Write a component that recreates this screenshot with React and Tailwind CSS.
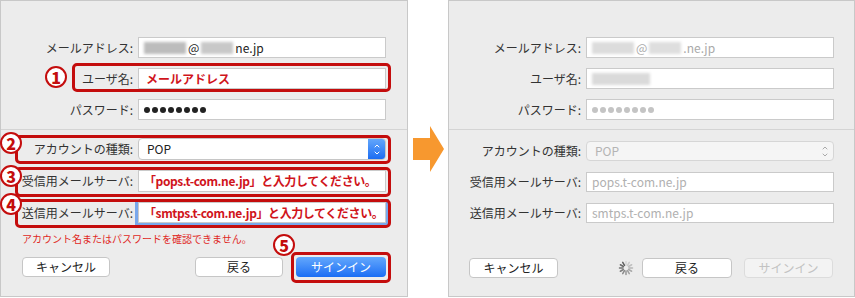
import { ChevronUp, ChevronDown } from 'lucide-react'

const font = "font-['Noto_Sans_CJK_JP',sans-serif]"

function Row({ label, children, className = '' }) {
  return (
    <div className={`flex items-center ${className}`}>
      <div className="w-[132px] text-right text-[12px] text-[#333] whitespace-nowrap">{label}</div>
      <div className="ml-[5px] w-[248px]">{children}</div>
    </div>
  )
}

function Field({ children, className = '', h = 'h-[21px]' }) {
  return (
    <div className={`${h} border border-[#cacaca] bg-white flex items-center px-[5px] text-[12px] whitespace-nowrap overflow-hidden ${className}`}>
      {children}
    </div>
  )
}

function Blur({ w, c = 'bg-[#c4c4c4]' }) {
  return <span className={`inline-block h-[12px] ${w} ${c} blur-[1.5px]`} />
}

// masked password characters
function Dots({ color }) {
  return (
    <span className="flex gap-[2px]" aria-label="●●●●●●●●">
      {Array.from({ length: 8 }, (_, i) => (
        <span key={i} className={`w-[6px] h-[6px] rounded-full ${color}`} />
      ))}
    </span>
  )
}

function Badge({ n, className }) {
  return (
    <div className={`absolute w-[22px] h-[22px] rounded-full border-[2.5px] border-[#c40d0d] bg-white text-[#c40d0d] font-black text-[16px] leading-none flex items-center justify-center ${className}`}>
      {n}
    </div>
  )
}

function Mark({ className }) {
  return <div className={`absolute border-[3px] border-[#c40d0d] rounded-[5px] ${className}`} />
}

function Button({ children, className = '' }) {
  return (
    <div className={`h-[20px] rounded-[4px] border border-[#c6c6c6] bg-white flex items-center justify-center text-[12px] text-[#222] ${className}`}>
      {children}
    </div>
  )
}

function Spinner() {
  const rays = Array.from({ length: 12 }, (_, i) => i)
  return (
    <svg width="16" height="16" viewBox="0 0 16 16">
      {rays.map((i) => (
        <line
          key={i}
          x1="8" y1="1.5" x2="8" y2="5"
          stroke="#555"
          strokeWidth="1.5"
          strokeLinecap="round"
          opacity={0.15 + (i / 12) * 0.85}
          transform={`rotate(${i * 30} 8 8)`}
        />
      ))}
    </svg>
  )
}

function Separator() {
  return <div className="mt-[9px] h-px bg-[#d4d4d4]" />
}

function LeftPanel() {
  return (
    <div className="relative w-[408px] h-[297px] border border-[#c8c8c8] bg-[#ececec] flex flex-col pt-[36px]">
      <Row label="メールアドレス:">
        <Field className="gap-[2px] text-[#222]">
          <Blur w="w-[42px]" c="bg-[#bcbcbc]" />
          <span>@</span>
          <Blur w="w-[32px]" c="bg-[#c8c8c8]" />
          <span>ne.jp</span>
        </Field>
      </Row>
      <Row label="ユーザ名:" className="mt-[10px]">
        <Field className="text-[#d0141b] font-bold pl-[7px]">メールアドレス</Field>
      </Row>
      <Row label="パスワード:" className="mt-[10px]">
        <Field className="pl-[5px]">
          <Dots color="bg-[#222]" />
        </Field>
      </Row>
      <Separator />
      <Row label="アカウントの種類:" className="mt-[8px]">
        <div className="h-[22px] rounded-[4px] border border-[#c6c6c6] bg-white flex items-center text-[12px] text-[#222]">
          <span className="flex-1 pl-[8px]">POP</span>
          <div className="w-[17px] h-full rounded-r-[3px] bg-gradient-to-b from-[#62a6fb] to-[#1b6cf2] flex flex-col items-center justify-center text-white">
            <ChevronUp size={8} strokeWidth={3} className="-mb-[1px]" />
            <ChevronDown size={8} strokeWidth={3} />
          </div>
        </div>
      </Row>
      <Row label="受信用メールサーバ:" className="mt-[10px]">
        <Field h="h-[22px]" className="text-[#d0141b] font-bold px-[2px] tracking-[-0.4px]">「pops.t-com.ne.jp」と入力してください。</Field>
      </Row>
      <Row label="送信用メールサーバ:" className="mt-[10px]">
        <Field className="text-[#d0141b] font-bold px-[2px] tracking-[-0.4px] ring-[3px] ring-[#79a8ec] border-[#5b8fe0]">「smtps.t-com.ne.jp」と入力してください。</Field>
      </Row>
      <div className="h-[34px] pl-[21px] pt-[8px] text-[10px] text-[#e0281e]">アカウント名またはパスワードを確認できません。</div>
      <div className="flex items-center">
        <Button className="ml-[21px] w-[88px]">キャンセル</Button>
        <Button className="ml-[85px] w-[88px]">戻る</Button>
        <div className="ml-[13px] w-[90px] h-[20px] rounded-[4px] bg-gradient-to-b from-[#63a7fc] to-[#196df4] flex items-center justify-center text-[12px] text-white">サインイン</div>
      </div>

      <Mark className="left-[71px] top-[62px] w-[319px] h-[29px]" />
      <Mark className="left-[14px] top-[134px] w-[376px] h-[29px]" />
      <Mark className="left-[14px] top-[166px] w-[376px] h-[30px]" />
      <Mark className="left-[14px] top-[198px] w-[376px] h-[29px]" />
      <Mark className="left-[290px] top-[251px] w-[100px] h-[31px]" />
      <Badge n="1" className="left-[44px] top-[65px]" />
      <Badge n="2" className="-left-[1px] top-[131px]" />
      <Badge n="3" className="-left-[1px] top-[164px]" />
      <Badge n="4" className="-left-[1px] top-[192px]" />
      <Badge n="5" className="left-[272px] top-[233px]" />
    </div>
  )
}

function RightPanel() {
  return (
    <div className="w-[407px] h-[297px] border border-[#c8c8c8] bg-[#ececec] flex flex-col pt-[36px]">
      <Row label="メールアドレス:">
        <Field className="gap-[2px] text-[#aaa]">
          <Blur w="w-[42px]" c="bg-[#dcdcdc]" />
          <span>@</span>
          <Blur w="w-[32px]" c="bg-[#dedede]" />
          <span>.ne.jp</span>
        </Field>
      </Row>
      <Row label="ユーザ名:" className="mt-[10px]">
        <Field>
          <Blur w="w-[58px]" c="bg-[#dadada]" />
        </Field>
      </Row>
      <Row label="パスワード:" className="mt-[10px]">
        <Field className="pl-[5px]">
          <Dots color="bg-[#c4c4c4]" />
        </Field>
      </Row>
      <Separator />
      <Row label="アカウントの種類:" className="mt-[11px]">
        <div className="h-[20px] rounded-[4px] border border-[#d6d6d6] bg-[#f5f5f5] flex items-center text-[12px] text-[#b4b4b4]">
          <span className="flex-1 pl-[8px]">POP</span>
          <div className="w-[17px] flex flex-col items-center justify-center text-[#9a9a9a]">
            <ChevronUp size={8} strokeWidth={2.5} className="-mb-[1px]" />
            <ChevronDown size={8} strokeWidth={2.5} />
          </div>
        </div>
      </Row>
      <Row label="受信用メールサーバ:" className="mt-[11px]">
        <Field h="h-[20px]" className="text-[#b0b0b0]">pops.t-com.ne.jp</Field>
      </Row>
      <Row label="送信用メールサーバ:" className="mt-[11px]">
        <Field h="h-[20px]" className="text-[#b0b0b0]">smtps.t-com.ne.jp</Field>
      </Row>
      <div className="h-[35px]" />
      <div className="flex items-center">
        <Button className="ml-[20px] w-[89px]">キャンセル</Button>
        <div className="ml-[60px] w-[16px] h-[16px]">
          <Spinner />
        </div>
        <Button className="ml-[8px] w-[90px]">戻る</Button>
        <div className="ml-[12px] w-[89px] h-[20px] rounded-[4px] border border-[#dcdcdc] bg-[#f3f3f3] flex items-center justify-center text-[12px] text-[#c2c2c2]">サインイン</div>
      </div>
    </div>
  )
}

export default function App() {
  return (
    <div className={`w-[855px] h-[298px] bg-white flex ${font}`}>
      <LeftPanel />
      <div className="w-[40px] pt-[126px] pl-[5px]">
        <svg width="32" height="47" viewBox="0 0 32 47">
          <polygon points="0,12 17,12 17,0 31,23 17,46 17,34 0,34" fill="#f7982f" />
        </svg>
      </div>
      <RightPanel />
    </div>
  )
}
